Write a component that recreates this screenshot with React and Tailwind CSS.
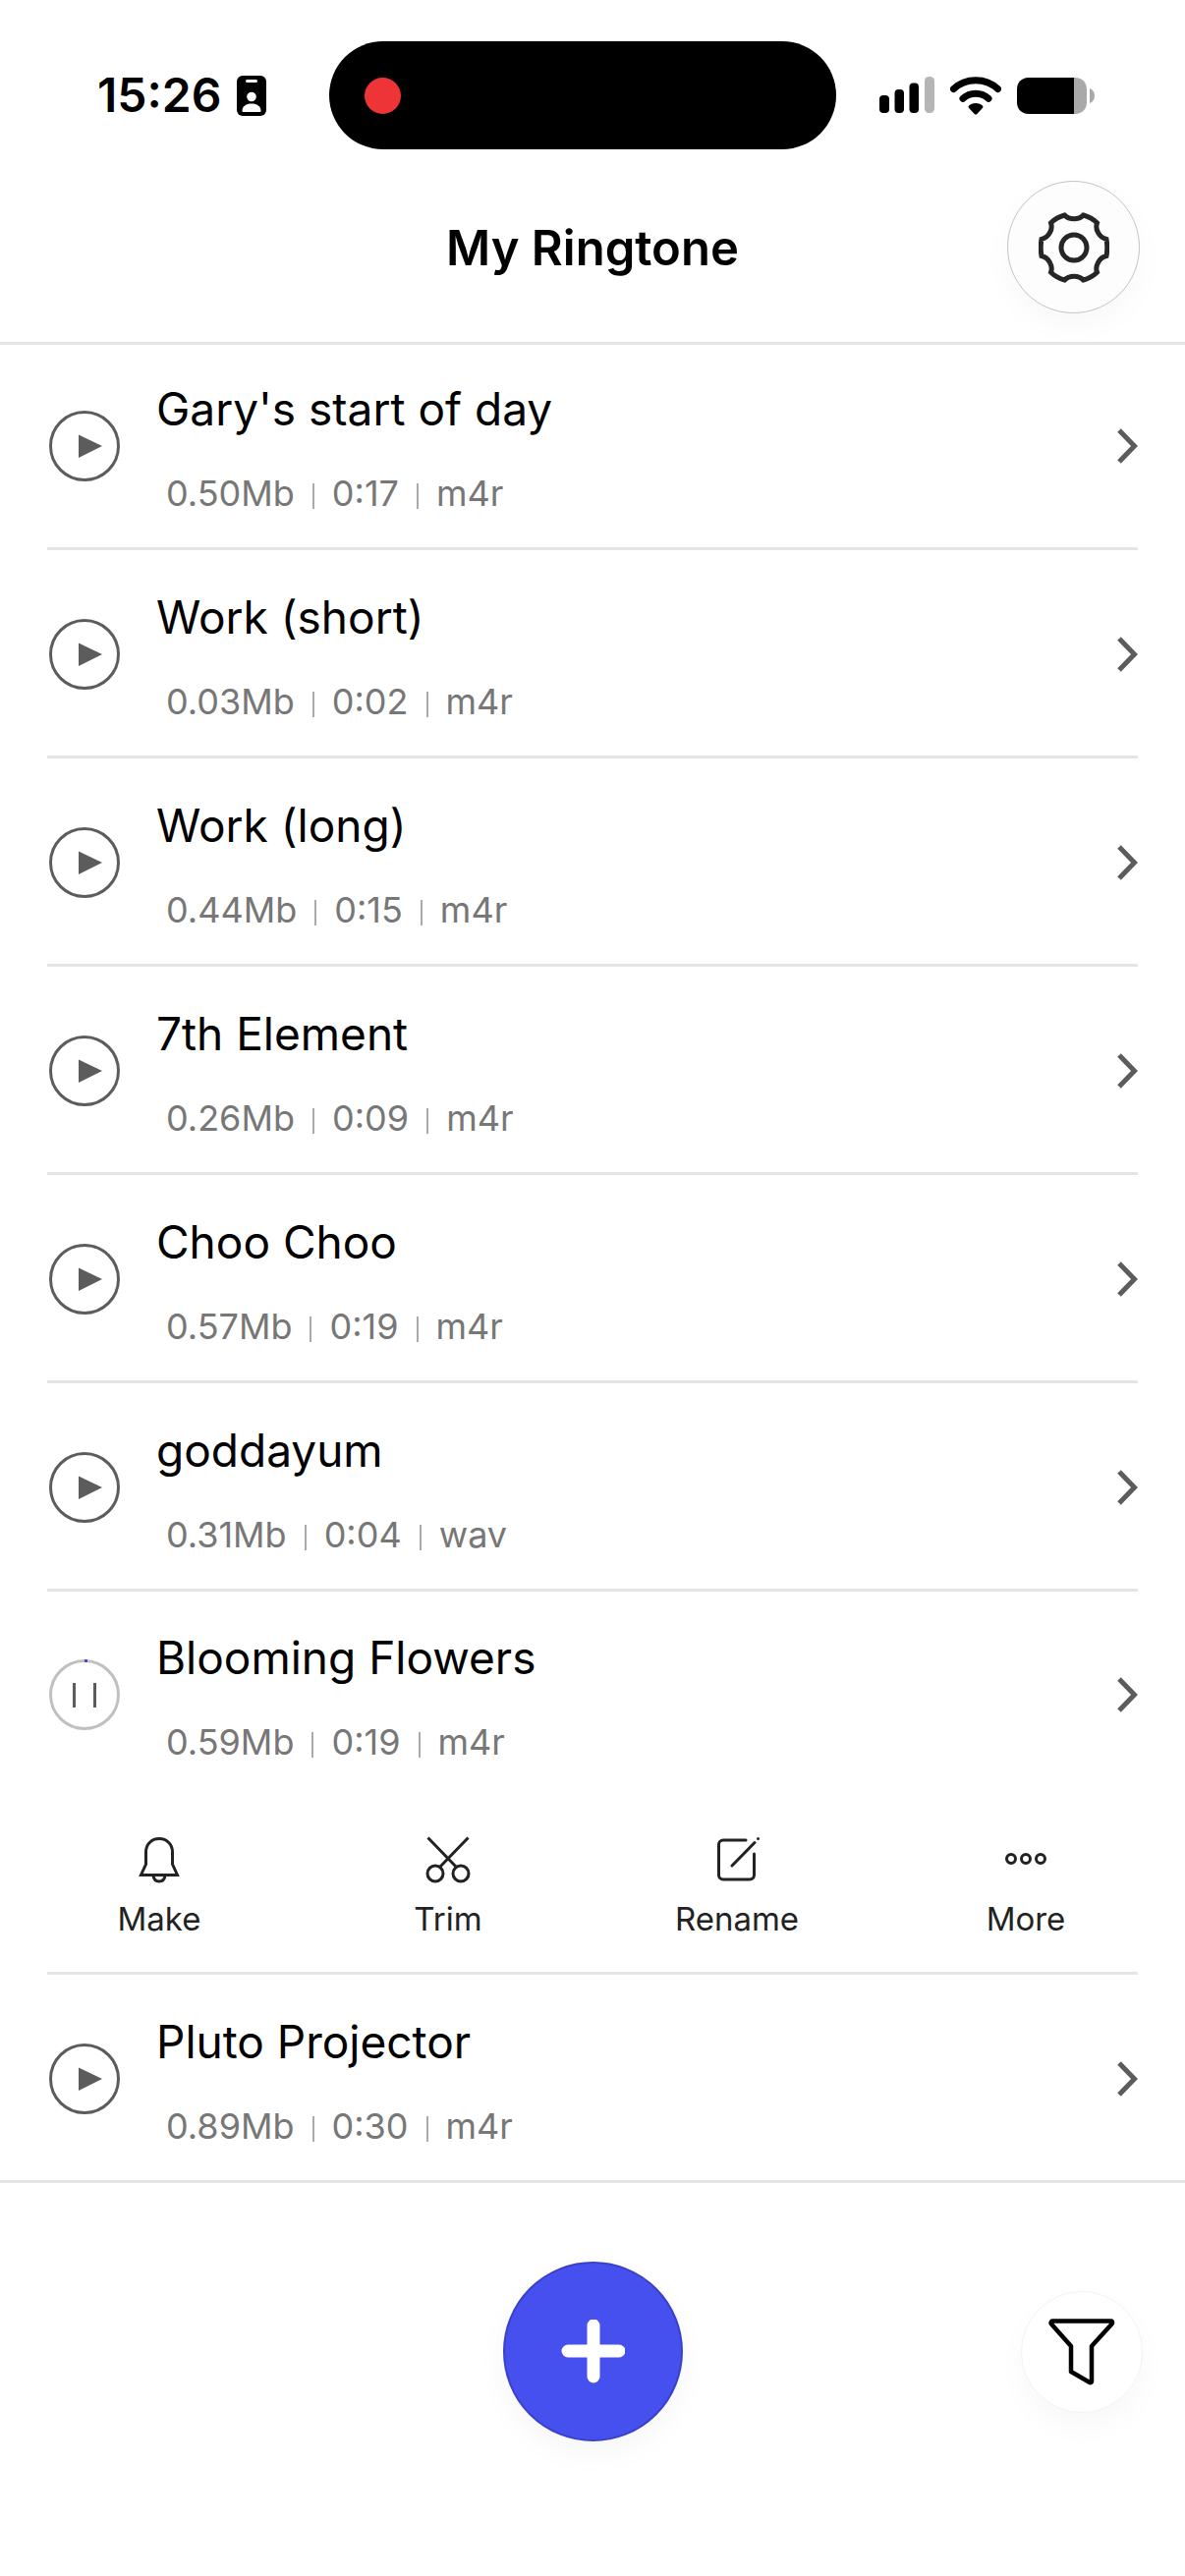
import React, { useState } from 'react';

const TRACKS = [
  { id: 1, title: "Gary's start of day", size: '0.50Mb', length: '0:17', format: 'm4r' },
  { id: 2, title: 'Work (short)', size: '0.03Mb', length: '0:02', format: 'm4r' },
  { id: 3, title: 'Work (long)', size: '0.44Mb', length: '0:15', format: 'm4r' },
  { id: 4, title: '7th Element', size: '0.26Mb', length: '0:09', format: 'm4r' },
  { id: 5, title: 'Choo Choo', size: '0.57Mb', length: '0:19', format: 'm4r' },
  { id: 6, title: 'goddayum', size: '0.31Mb', length: '0:04', format: 'wav' },
  { id: 7, title: 'Blooming Flowers', size: '0.59Mb', length: '0:19', format: 'm4r' },
  { id: 8, title: 'Pluto Projector', size: '0.89Mb', length: '0:30', format: 'm4r' },
];

const BadgeIcon = () => (
  <svg width="30" height="41" viewBox="0 0 30 41" aria-hidden="true">
    <rect width="30" height="41" rx="6" fill="#000" />
    <rect x="9" y="4" width="12" height="3" rx="1.5" fill="#fff" />
    <circle cx="15" cy="21.5" r="4.8" fill="#fff" />
    <path d="M5.5 36c0-5 4-7.500 9.500-7.500s9.500 2.500 9.500 7.500c0 .7-.5 1-1.200 1H6.700c-.7 0-1.200-.3-1.200-1z" fill="#fff" />
  </svg>
);

const SignalIcon = () => (
  <svg width="56" height="38" viewBox="0 0 56 38" aria-hidden="true">
    <rect x="0" y="19" width="10" height="18" rx="4" />
    <rect x="15.500" y="13" width="9.500" height="24" rx="4" />
    <rect x="30.500" y="6.500" width="9.500" height="30.500" rx="4" />
    <rect x="46" y="0" width="10" height="37" rx="4.500" fill="#b5b5b5" />
  </svg>
);

const WifiIcon = () => (
  <svg width="52" height="39" viewBox="0 0 52 39" fill="none" aria-hidden="true">
    <path d="M3.500 12.500C9.500 6.800 17.300 3.700 26 3.700s16.500 3.100 22.500 8.800" stroke="#000" strokeWidth="7" strokeLinecap="round" />
    <path d="M13 22.300c3.500-3.400 8-5.100 13-5.100s9.500 1.700 13 5.100" stroke="#000" strokeWidth="7" strokeLinecap="round" />
    <path d="M26 27c3 0 5.300 1 6.900 2.500.8.700.7 1.700 0 2.400l-5.600 6c-.8.800-1.800.8-2.600 0l-5.600-6c-.7-.7-.8-1.700 0-2.400C20.700 28 23 27 26 27z" fill="#000" />
  </svg>
);

const BatteryIcon = () => (
  <svg width="80" height="37" viewBox="0 0 80 37" aria-hidden="true">
    <path d="M58 0h1.500C66 0 71 5 71 11.500v14C71 32 66 37 59.500 37H58z" fill="#a9a9a9" />
    <path d="M11.500 0H58v37H11.500C5 37 0 32 0 25.500v-14C0 5 5 0 11.500 0z" fill="#000" />
    <path d="M74 11c3 1 5 4 5 7.500S77 25 74 26z" fill="#a9a9a9" />
  </svg>
);

const GearIcon = () => (
  <svg width="72" height="72" viewBox="0 0 72 72" fill="none" stroke="#262626" strokeWidth="5" aria-hidden="true">
    <path d="M26.500 3 C31 8 41 8 45.500 3 C51 4.500 55.500 7 59.500 10.800 C57 17.500 62 26 69 27.500 C70 33 70 39 69 44.500 C62 46 57 54.500 59.500 61.200 C55.500 65 51 67.500 45.500 69 C41 64 31 64 26.500 69 C21 67.500 16.500 65 12.500 61.200 C15 54.500 10 46 3 44.500 C2 39 2 33 3 27.500 C10 26 15 17.500 12.500 10.800 C16.500 7 21 4.500 26.500 3 Z" />
    <circle cx="36" cy="36" r="13" />
  </svg>
);

const PlayIcon = () => (
  <svg width="72" height="72" viewBox="0 0 72 72" aria-hidden="true">
    <circle cx="36" cy="36" r="34.500" fill="none" stroke="#5c5c5c" strokeWidth="3" />
    <path d="M30 24.500v23.500L54 36z" fill="#5c5c5c" />
  </svg>
);

const PauseIcon = () => (
  <svg width="72" height="72" viewBox="0 0 72 72" aria-hidden="true">
    <circle cx="36" cy="36" r="34.500" fill="none" stroke="#c0c0c0" strokeWidth="3" />
    <path d="M36 0h3v3h-3z" fill="#5146c8" />
    <path d="M24 24h3v25h-3zM45 24h3v25h-3z" fill="#5c5c5c" />
  </svg>
);

const ChevronIcon = () => (
  <svg width="21" height="36" viewBox="0 0 21 36" fill="none" stroke="#5c5c5c" strokeWidth="5" aria-hidden="true">
    <path d="M2 2l15.500 16L2 34" />
  </svg>
);

const BellIcon = () => (
  <svg width="48" height="48" viewBox="0 0 48 48" fill="none" stroke="#222" strokeWidth="3" aria-hidden="true">
    <path d="M24 2.500C16 2.500 10.500 8.500 10.500 16v12.500L5.500 39.500h37L37.500 28.500V16C37.500 8.500 32 2.500 24 2.500z" />
    <path d="M18 40c.5 4 3 6 6 6s5.500-2 6-6" />
  </svg>
);

const ScissorsIcon = () => (
  <svg width="48" height="48" viewBox="0 0 48 48" fill="none" stroke="#222" strokeWidth="3" aria-hidden="true">
    <path d="M3.500 1.500L33 32M44.500 1.500L15 32" />
    <circle cx="11" cy="38" r="8" />
    <circle cx="37" cy="38" r="8" />
  </svg>
);

const EditIcon = () => (
  <svg width="48" height="48" viewBox="0 0 48 48" fill="none" stroke="#222" strokeWidth="3" strokeLinecap="round" aria-hidden="true">
    <path d="M33 4H10a4.500 4.500 0 0 0-4.500 4.500v31A4.500 4.500 0 0 0 10 44h27a4.500 4.500 0 0 0 4.500-4.500V18" />
    <path d="M19 30L42 6.500" />
    <path d="M45.500 2.500v.1" />
  </svg>
);

const MoreIcon = () => (
  <svg width="48" height="48" viewBox="0 0 48 48" fill="none" stroke="#222" strokeWidth="3" aria-hidden="true">
    <circle cx="9" cy="23" r="4.500" />
    <circle cx="24" cy="23" r="4.500" />
    <circle cx="39" cy="23" r="4.500" />
  </svg>
);

const PlusIcon = () => (
  <svg width="66" height="66" viewBox="0 0 66 66" stroke="#fff" strokeWidth="13" strokeLinecap="round" aria-hidden="true">
    <path d="M34 6v52M8 32h52" />
  </svg>
);

const FunnelIcon = () => (
  <svg width="68" height="68" viewBox="0 0 68 68" fill="none" stroke="#000" strokeWidth="4.500" strokeLinejoin="round" aria-hidden="true">
    <path d="M4 2.500h60c1 0 1.500 2 .5 3L44 28v36c0 1-1 1.500-2 1L23 54V28L3 5.500c-1-1.200 0-3 1-3z" />
  </svg>
);

const ACTIONS = [
  { label: 'Make', icon: BellIcon },
  { label: 'Trim', icon: ScissorsIcon },
  { label: 'Rename', icon: EditIcon },
  { label: 'More', icon: MoreIcon },
];

const StatusBar = () => (
  <div className="grid h-[184px] grid-cols-[1fr_516px_1fr] items-center pt-[10px] pr-5">
    <div className="flex items-center gap-4 pl-[99px]">
      <span className="text-[48px] leading-[56px] font-semibold">15:26</span>
      <BadgeIcon />
    </div>
    <div className="flex h-[110px] items-center rounded-full bg-black pl-9">
      <span className="h-[37px] w-[37px] rounded-full bg-[#ef3438]" />
    </div>
    <div className="flex items-center gap-4 pl-11">
      <SignalIcon />
      <WifiIcon />
      <BatteryIcon />
    </div>
  </div>
);

const Separator = () => <span className="mx-[18px] mt-1.5 h-[26px] w-[2px] bg-[#aaa]" />;

const TrackRow = ({ track, playing, onToggle }) => (
  <div className={`flex items-center px-12 ${playing ? 'h-[204px]' : 'h-[206px]'}`}>
    <button type="button" className="ml-[2px]" aria-label={`${playing ? 'Pause' : 'Play'} ${track.title}`} onClick={onToggle}>
      {playing ? <PauseIcon /> : <PlayIcon />}
    </button>
    <div className="ml-[37px] flex-1 pt-1">
      <h2 className="text-[46px] leading-[60px]">{track.title}</h2>
      <p className="mt-8 flex items-center pl-[10px] text-[36px] leading-[48px] text-[#777]">
        <span>{track.size}</span>
        <Separator />
        <span>{track.length}</span>
        <Separator />
        <span>{track.format}</span>
      </p>
    </div>
    <button type="button" aria-label={`Show actions for ${track.title}`}>
      <ChevronIcon />
    </button>
  </div>
);

const ActionBar = () => (
  <div className="grid grid-cols-4 px-[15px] pt-[42px] pb-[34px]">
    {ACTIONS.map(({ label, icon: Icon }) => (
      <button key={label} type="button" className="flex flex-col items-center gap-4 text-[33px] leading-[40px] text-[#222]">
        <Icon />
        {label}
      </button>
    ))}
  </div>
);

const App = () => {
  const [playingId, setPlayingId] = useState(7);

  return (
    <div className="min-h-screen bg-white font-[Inter,'Liberation_Sans',sans-serif] text-black">
      <StatusBar />

      <header className="grid h-[167px] grid-cols-[1fr_auto_1fr] items-start border-b-[3px] border-[#e5e5e5]">
        <h1 className="col-start-2 mt-[39px] text-[49px] leading-[60px] font-semibold">My Ringtone</h1>
        <button
          type="button"
          aria-label="Settings"
          className="mr-[46px] flex h-[135px] w-[135px] items-center justify-center justify-self-end rounded-full border border-[#c4c4c4] bg-[#fdfdfd] shadow-[0_12px_30px_rgba(0,0,0,0.03)]"
        >
          <GearIcon />
        </button>
      </header>

      <ul>
        {TRACKS.map((track) => {
          const playing = track.id === playingId;
          return (
            <li key={track.id} className="group pt-[3px] first:pt-0">
              <TrackRow track={track} playing={playing} onToggle={() => setPlayingId(playing ? null : track.id)} />
              {playing && <ActionBar />}
              <div className="mx-12 h-[3px] bg-[#e5e5e5] group-last:mx-0" />
            </li>
          );
        })}
      </ul>

      {/* Bottom bar: add in the middle, filter on the right */}
      <footer className="grid grid-cols-[1fr_auto_1fr] items-center pt-20 pb-10">
        <button
          type="button"
          aria-label="Add ringtone"
          className="col-start-2 flex h-[183px] w-[183px] items-center justify-center rounded-full border-2 border-[#3a41c8] bg-[#4550ef] shadow-[0_12px_30px_rgba(0,0,0,0.04)]"
        >
          <PlusIcon />
        </button>
        <button
          type="button"
          aria-label="Filter"
          className="mr-[43px] flex h-[124px] w-[124px] items-center justify-center justify-self-end rounded-full border border-[#f3f3f3] bg-white shadow-[0_14px_30px_rgba(0,0,0,0.03)]"
        >
          <FunnelIcon />
        </button>
      </footer>
    </div>
  );
};

export default App;
